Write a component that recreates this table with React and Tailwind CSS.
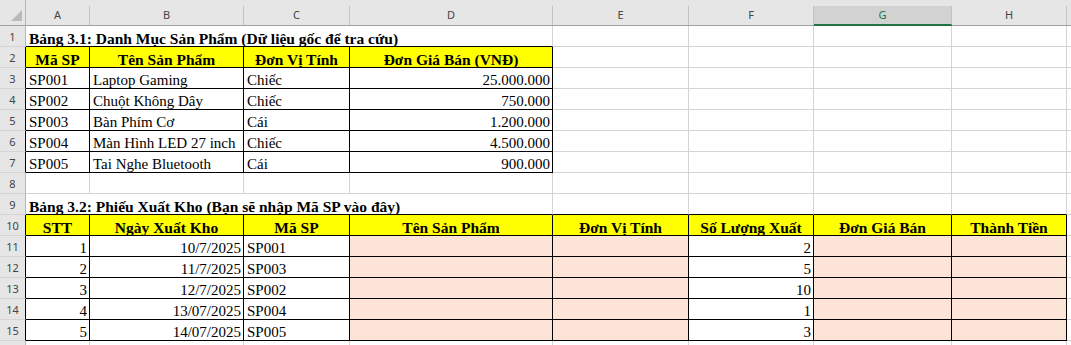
import React from "react";

const serif = "font-['Liberation_Serif','Times_New_Roman',serif]";
const sans = "font-['Noto_Sans','Open_Sans',sans-serif]";

const RB = { g: "border-r-[#d4d4d4]", k: "border-r-black" };
const BB = { g: "border-b-[#d4d4d4]", k: "border-b-black" };
const BG = { w: "bg-white", y: "bg-[#ffff00]", p: "bg-[#fce4d6]" };
const AL = {
  l: "justify-start pl-[3px] pr-[2px]",
  r: "justify-end pl-[2px] pr-[2px]",
  c: "justify-center px-[2px]",
};

function Cell({ children, r = "g", b = "g", bg = "w", al = "l", bold = false, span = false }) {
  return (
    <div
      className={`h-[21px] border-r border-b ${RB[r]} ${BB[b]} ${BG[bg]} flex items-end ${AL[al]} ${
        span ? "col-span-4" : "overflow-hidden"
      } whitespace-nowrap ${serif} leading-[15px] text-black ${
        bold ? "font-bold text-[15.5px]" : "text-[15px]"
      }`}
    >
      {children}
    </div>
  );
}

function RowNum({ n, k = false }) {
  return (
    <div
      className={`h-[21px] bg-[#e6e6e6] border-b border-b-[#d4d4d4] border-r ${
        k ? "border-r-black" : "border-r-[#b5b5b5]"
      } flex items-center justify-center pt-[2px] ${sans} text-[11px] text-[#444]`}
    >
      {n}
    </div>
  );
}

function ColHead({ letter, sel = false }) {
  return (
    <div
      className={`h-[26px] bg-[#e6e6e6] border-b ${
        sel ? "border-b-[#217346]" : "border-b-[#9f9f9f]"
      } pt-[6px]`}
    >
      <div
        className={`h-full border-r border-r-[#c3c3c3] flex items-center justify-center ${sans} text-[11px] ${
          sel ? "bg-[#d2d2d2] text-[#217346] border-b border-b-[#217346]" : "text-[#444]"
        }`}
      >
        {letter}
      </div>
    </div>
  );
}

function Blank({ n }) {
  return Array.from({ length: n }).map((_, i) => <Cell key={i} />);
}

const products = [
  ["SP001", "Laptop Gaming", "Chiếc", "25.000.000"],
  ["SP002", "Chuột Không Dây", "Chiếc", "750.000"],
  ["SP003", "Bàn Phím Cơ", "Cái", "1.200.000"],
  ["SP004", "Màn Hình LED 27 inch", "Chiếc", "4.500.000"],
  ["SP005", "Tai Nghe Bluetooth", "Cái", "900.000"],
];

const exportsData = [
  ["1", "10/7/2025", "SP001", "2"],
  ["2", "11/7/2025", "SP003", "5"],
  ["3", "12/7/2025", "SP002", "10"],
  ["4", "13/07/2025", "SP004", "1"],
  ["5", "14/07/2025", "SP005", "3"],
];

const headers2 = [
  "STT",
  "Ngày Xuất Kho",
  "Mã SP",
  "Tên Sản Phẩm",
  "Đơn Vị Tính",
  "Số Lượng Xuất",
  "Đơn Giá Bán",
  "Thành Tiền",
];

export default function App() {
  return (
    <div className="w-[1071px] h-[345px] overflow-hidden bg-white">
      <div className="grid grid-cols-[26px_64px_154px_106px_203px_136px_125px_138px_115px_1fr]">
        {/* column headers */}
        <div className="h-[26px] bg-[#e6e6e6] border-b border-b-[#9f9f9f] border-r border-r-[#b5b5b5]">
          <svg width="25" height="25" className="block">
            <polygon points="22,10 22,21 11,21" fill="#b9b9b9" />
          </svg>
        </div>
        {["A", "B", "C", "D", "E", "F"].map((l) => (
          <ColHead key={l} letter={l} />
        ))}
        <ColHead letter="G" sel />
        <ColHead letter="H" />
        <ColHead letter="" />

        {/* row 1 */}
        <RowNum n={1} />
        <Cell span b="k" bold>
          Bảng 3.1: Danh Mục Sản Phẩm (Dữ liệu gốc để tra cứu)
        </Cell>
        <Blank n={5} />

        {/* row 2 */}
        <RowNum n={2} k />
        <Cell r="k" b="k" bg="y" al="c" bold>Mã SP</Cell>
        <Cell r="k" b="k" bg="y" al="c" bold>Tên Sản Phẩm</Cell>
        <Cell r="k" b="k" bg="y" al="c" bold>Đơn Vị Tính</Cell>
        <Cell r="k" b="k" bg="y" al="c" bold>Đơn Giá Bán (VNĐ)</Cell>
        <Blank n={5} />

        {/* rows 3-7 */}
        {products.map((p, i) => (
          <React.Fragment key={p[0]}>
            <RowNum n={i + 3} k />
            <Cell r="k" b="k">{p[0]}</Cell>
            <Cell r="k" b="k">{p[1]}</Cell>
            <Cell r="k" b="k">{p[2]}</Cell>
            <Cell r="k" b="k" al="r">{p[3]}</Cell>
            <Blank n={5} />
          </React.Fragment>
        ))}

        {/* row 8 */}
        <RowNum n={8} />
        <Blank n={9} />

        {/* row 9 */}
        <RowNum n={9} />
        <Cell span b="k" bold>
          Bảng 3.2: Phiếu Xuất Kho (Bạn sẽ nhập Mã SP vào đây)
        </Cell>
        <Cell b="k" />
        <Cell b="k" />
        <Cell b="k" />
        <Cell b="k" />
        <Cell />

        {/* row 10 */}
        <RowNum n={10} k />
        {headers2.map((h) => (
          <Cell key={h} r="k" b="k" bg="y" al="c" bold>
            {h}
          </Cell>
        ))}
        <Cell />

        {/* rows 11-15 */}
        {exportsData.map((e, i) => (
          <React.Fragment key={e[0]}>
            <RowNum n={i + 11} k />
            <Cell r="k" b="k" al="r">{e[0]}</Cell>
            <Cell r="k" b="k" al="r">{e[1]}</Cell>
            <Cell r="k" b="k">{e[2]}</Cell>
            <Cell r="k" b="k" bg="p" />
            <Cell r="k" b="k" bg="p" />
            <Cell r="k" b="k" al="r">{e[3]}</Cell>
            <Cell r="k" b="k" bg="p" />
            <Cell r="k" b="k" bg="p" />
            <Cell />
          </React.Fragment>
        ))}

        {/* row 16 (only its top edge is in view) */}
        <RowNum n="" />
        <Blank n={9} />
      </div>
    </div>
  );
}
